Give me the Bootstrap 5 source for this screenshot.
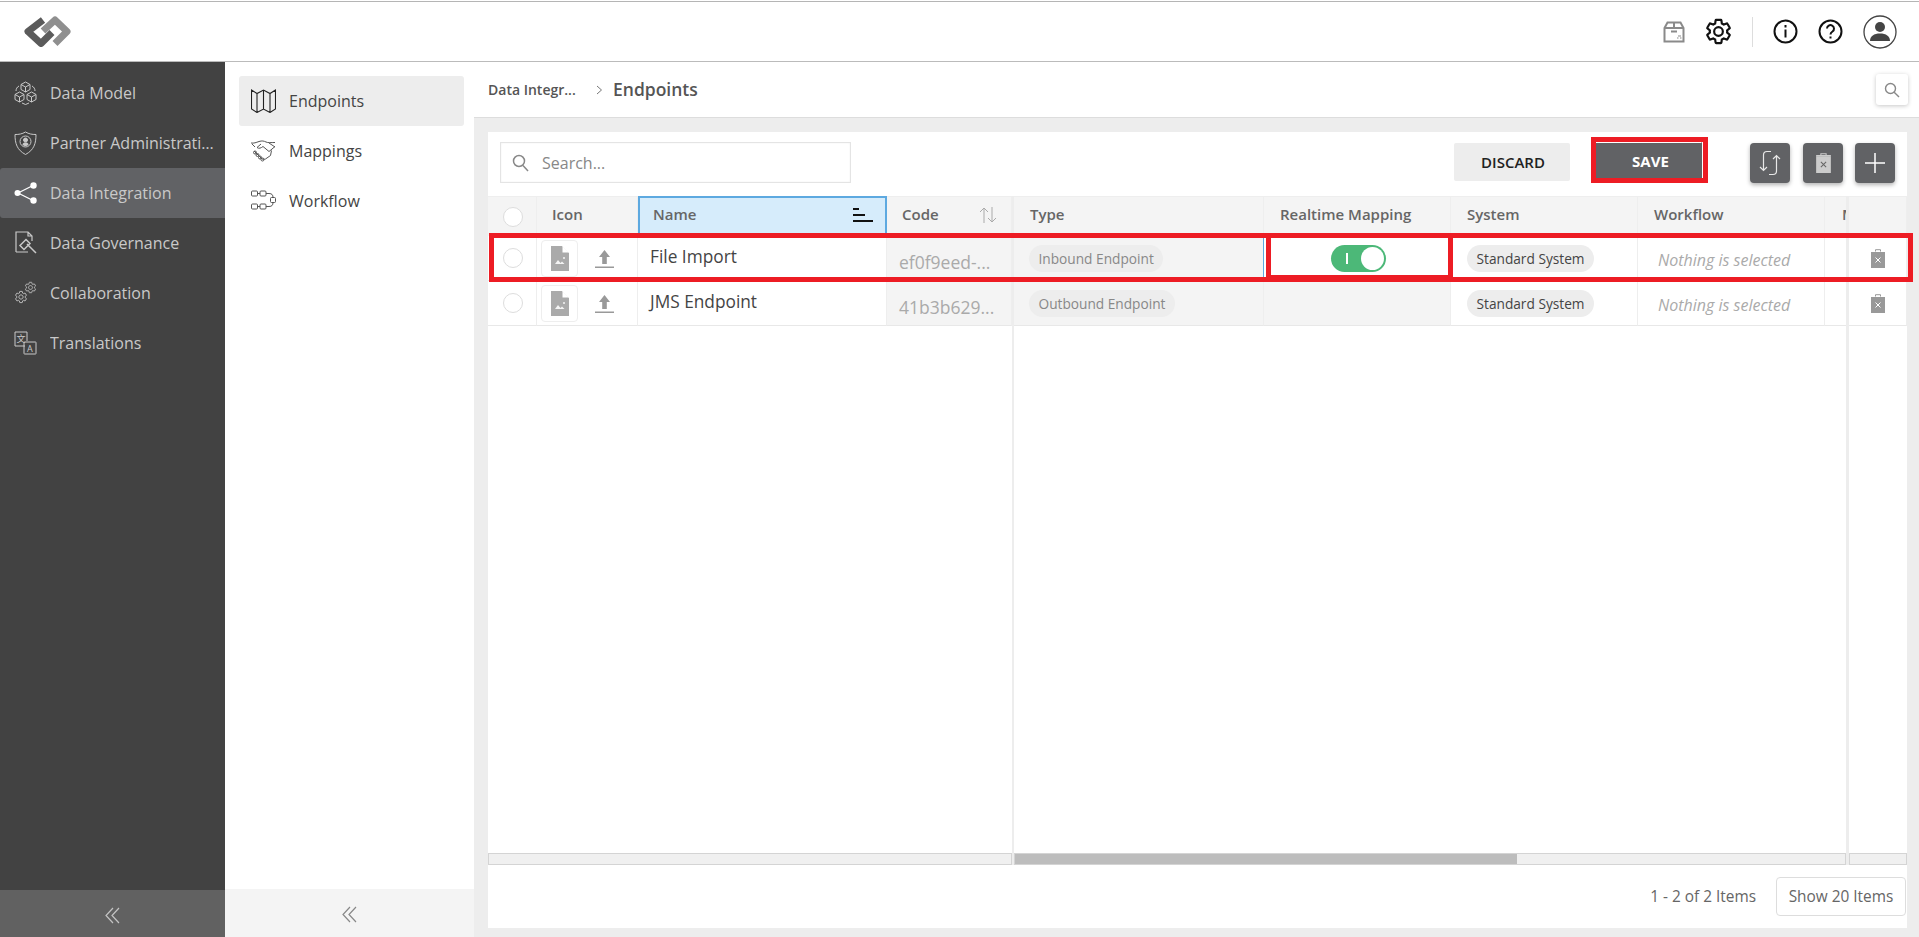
<!DOCTYPE html>
<html lang="en">
<head>
<meta charset="utf-8">
<title>Endpoints</title>
<link rel="stylesheet" href="https://cdn.jsdelivr.net/npm/bootstrap@5.3.0/dist/css/bootstrap.min.css">
<style>
html,body{height:100%;overflow:hidden}
body{font-family:"Open Sans","Liberation Sans",sans-serif;font-size:16px;color:#444;background:#ededed;position:relative}
.topline{height:2px;background:linear-gradient(#fff 0 1px,#b5b5b5 1px);flex:none}
.topbar{height:60px;background:#fff;border-bottom:1px solid #bbb;flex:none;padding-right:22px}
.logo{margin-left:24px}
.tb-box{margin-right:19px}
.tb-sep{width:1px;height:30px;background:#ddd;margin:0 20px 0 19px}
.tb-q{margin-left:20px}
.tb-user{margin-left:20px}
.app-body{flex:1;min-height:0}
.side-dark{width:225px;background:#424242;flex:none;padding-top:6px}
.side-light{width:249px;background:#fff;flex:none;padding-top:14px}
.side-dark .nav-entry{height:50px;color:#c9c9c9;padding-left:14px;gap:13px;border-radius:3px 0 0 3px}
.side-dark .nav-entry svg{flex:none;width:23px;height:24px}
.side-dark .nav-entry.is-on{background:#616265}
.nav-label{min-width:0;white-space:nowrap;overflow:hidden;text-overflow:ellipsis;padding-right:8px}
.side-light .nav-entry{height:50px;margin:0 10px 0 14px;padding-left:12px;gap:13px;border-radius:3px;color:#444}
.side-light .nav-entry svg{flex:none;width:25px;height:24px}
.side-light .nav-entry.is-on{background:#ededed}
.collapse-dark{height:47px;background:#616161;padding-top:3px}
.collapse-light{height:48px;background:#f4f4f4;padding-top:2px}
.crumbbar{height:56px;background:#fff;border-bottom:1px solid #ddd;padding:0 11px 0 14px;flex:none}
.crumb-a{font-size:14px;font-weight:600;color:#555;width:100px}
.crumb-sep{margin:0 10px 0 8px;line-height:0}
.crumb-b{font-size:17.5px;font-weight:600;color:#555}
.crumb-search{width:32px;height:31px;border-radius:3px;background:#fff;box-shadow:0 1px 4px rgba(0,0,0,.22)}
.workarea{flex:1;min-height:0;padding:14px 12px 9px 14px}
.sheet{background:#fff;height:100%}
.toolbar{height:64px;padding:10px 12px 0 12px;flex:none}
.searchbox{width:351px;height:41px;border:1px solid #e4e4e4;padding-left:11px;gap:13px;color:#888;box-shadow:inset 0 0 2px #eee}
.btn.btn-discard{width:116px;height:38px;margin-left:auto;background:#ededed;border-radius:2px;font-size:15px;font-weight:600;color:#222;margin-top:1px;padding:0 0 0 2px}
.btn.btn-save{width:107px;height:37px;margin-left:25px;background:#616265;border-top:1px solid #fff;font-size:15px;font-weight:700;color:#fff;border-radius:0;padding:2px 0 0 4px}
.btn-square{width:40px;height:40px;background:#616265;border-radius:4px;box-shadow:0 2px 4px rgba(0,0,0,.3);margin-top:1px}
.btn-square.first{margin-left:48px}
.btn-square.gap{margin-left:13px}
.btn-square.gap-last{margin-left:12px}
.gridwrap{flex:1;min-height:0}
.pane{min-height:0;overflow:hidden}
.pane-a{width:526px;flex:none;border-right:2px solid #ededed}
.pane-b{flex:1;min-width:0;border-right:3px solid #ededed}
.pane-c{width:58px;flex:none}
.datagrid{table-layout:fixed;margin:0;--bs-table-bg:transparent;--bs-table-border-color:#e8e8e8;border-collapse:separate;border-spacing:0}
.datagrid th,.datagrid td{padding:0;vertical-align:middle;border-bottom:1px solid #e8e8e8;border-right:1px solid #eee;overflow:hidden;white-space:nowrap}
.datagrid th{height:40px;background:#f4f4f4;font-size:15px;font-weight:600;color:#666;border-top:1px solid #eee;padding-left:15px;border-bottom:0;padding-bottom:4px}
.pane-b .datagrid th{padding-left:16px}
.datagrid td{height:45px}
.datagrid td.ro{background:#f4f4f4}
.datagrid th.sorted{background:#d6ecfb;border:2px solid #5da9e0;padding-left:13px}
.sort-mark{position:absolute;top:10px;right:12px}
.sort-mark.soft{right:14px}
.rad{display:block;width:20px;height:20px;border:1px solid #ddd;border-radius:50%;background:#fff;margin-left:15px}
.thumb{width:37px;height:37px;border:1px solid #eee;border-radius:4px;margin-left:4px}
.upl{margin-left:17px}
.namecell{font-size:17.3px;color:#444;padding-left:12px!important;padding-bottom:3px!important}
.codecell{font-size:17.5px;color:#aaa;padding-left:12px!important;padding-top:8px!important}
.pillish{display:inline-block;height:27px;line-height:27px;padding:0 9.5px;border-radius:14px;background:#ededed;font-size:13.7px;color:#888;margin-left:15px}
.pillish.std{color:#444;margin-left:16px}
.noneset{font-size:16px;font-style:italic;color:#aaa;padding-left:20px!important;padding-top:3px!important}
.switchy{width:55px;height:27px;border-radius:14px;background:#4cb878;position:relative;margin:0 auto;left:1px}
.switchy i{position:absolute;left:15px;top:8px;width:2px;height:11px;background:#fff}
.switchy b{position:absolute;right:2px;top:2px;width:23px;height:23px;border-radius:50%;background:#fff}
.rowmark{border-right:1px solid #5da9e0!important}
.trash-ico{display:block;margin:auto}
.hscroll{height:12px;flex:none;background:#f0f0f0;border:1px solid #d4d4d4}
.hscroll-thumb{height:100%;width:60.5%;background:#bdbdbd}
.pager{height:63px;flex:none;padding:12px 1px 0 0;font-size:15.4px;color:#666;gap:20px}
.pager-btn{width:130px;height:39px;border:1px solid #ddd;border-radius:4px;color:#666;font-size:15.4px;background:#fff}
.pane-b .datagrid th.clip-head{padding-left:17px}
.annot{position:absolute;border:solid #ed1c24;pointer-events:none}
.annot-save{left:1591px;top:137px;width:117px;height:46px;border-width:5px}
.annot-row{left:489px;top:233px;width:777px;height:49px;border-width:5px 0 5px 5px}
.annot-map{left:1266px;top:233px;width:187px;height:49px;border-width:5px 5px 7px 5px}
.annot-sys{left:1453px;top:233px;width:460px;height:49px;border-width:5px 5px 5px 0}
</style>
</head>
<body class="d-flex flex-column">
<svg width="0" height="0" class="position-absolute">
<defs>
<symbol id="gear" viewBox="0 0 24 24"><path fill="none" d="M19.14 12.94c.04-.3.06-.61.06-.94 0-.32-.02-.64-.07-.94l2.03-1.58c.18-.14.23-.41.12-.61l-1.92-3.32c-.12-.22-.37-.29-.59-.22l-2.39.96c-.5-.38-1.03-.7-1.62-.94l-.36-2.54c-.04-.24-.24-.41-.48-.41h-3.84c-.24 0-.43.17-.47.41l-.36 2.54c-.59.24-1.13.57-1.62.94l-2.39-.96c-.22-.08-.47 0-.59.22L2.74 8.87c-.12.21-.08.47.12.61l2.03 1.58c-.05.3-.09.63-.09.94s.02.64.07.94l-2.03 1.58c-.18.14-.23.41-.12.61l1.92 3.32c.12.22.37.29.59.22l2.39-.96c.5.38 1.03.7 1.62.94l.36 2.54c.05.24.24.41.48.41h3.84c.24 0 .44-.17.47-.41l.36-2.54c.59-.24 1.13-.56 1.62-.94l2.39.96c.22.08.47 0 .59-.22l1.92-3.32c.12-.22.07-.47-.12-.61l-2.01-1.58zM12 15.6c-1.98 0-3.6-1.62-3.6-3.6s1.62-3.6 3.6-3.6 3.6 1.62 3.6 3.6-1.62 3.6-3.6 3.6z"/></symbol>
<symbol id="fileimg" viewBox="0 0 18 25"><path fill="#aaa" d="M0 0h11l7 7v18H0z"/><path fill="#fff" d="M11.500 0 18 6.500h-6.500z"/><path fill="#f4f4f4" d="M4 18l3-4 2.500 3 1.500-1.500 2.500 2.500z"/><circle cx="13" cy="12" r="1" fill="#f4f4f4"/></symbol>
<symbol id="upload" viewBox="0 0 19 19"><path fill="#999" d="M9.500 1 15 8h-3.200v7H7.200V8H4z"/><rect y="17.500" width="19" height="1.500" fill="#999"/></symbol>
<symbol id="trash" viewBox="0 0 14 19"><path fill="#999" d="M0 3h14v16H0z"/><path fill="none" stroke="#999" d="M4.500 2.500V.7h5v1.800"/><path stroke="#fff" d="M4.500 8.500l5 5m0-5l-5 5"/></symbol>
</defs>
</svg>
<div class="topline"></div>
<header class="topbar d-flex align-items-center">
  <svg class="logo" width="47" height="31" viewBox="0 0 47 31" fill="none" stroke-width="7" stroke-linejoin="round">
    <path stroke="#5b5b5b" d="M19 4 4 15.500 17 27.500 28 16.500"/>
    <path stroke="#8f8f8f" d="M19 15 31 4 43 15.500 31 27.500"/>
  </svg>
  <div class="ms-auto d-flex align-items-center">
    <svg class="tb-box" width="22" height="22" viewBox="0 0 22 22" fill="none" stroke="#8a8a8a" stroke-width="2"><path d="M1.500 7 4.500 1.500h13l3 5.500v13.500h-19zM1.500 7h19M11 1.500V7M8 10.500h6"/><path d="M14 17h1.500M17 17h1.500M15 15h3" stroke-width="1.200"/></svg>
    <svg width="29" height="29" stroke="#111" stroke-width="1.800"><use href="#gear"/></svg>
    <span class="tb-sep"></span>
    <svg width="25" height="25" viewBox="0 0 25 25" fill="none" stroke="#111" stroke-width="2"><circle cx="12.500" cy="12.500" r="11"/><path d="M12.500 10.500v8"/><path d="M12.500 6v2.500"/></svg>
    <svg class="tb-q" width="25" height="25" viewBox="0 0 25 25" fill="none" stroke="#111" stroke-width="2"><circle cx="12.500" cy="12.500" r="11"/><path d="M9 9.500a3.500 3.500 0 1 1 5.500 3c-1.500 1-2 1.600-2 3"/><path d="M12.500 17.500v2"/></svg>
    <svg class="tb-user" width="34" height="34" viewBox="0 0 34 34"><circle cx="17" cy="17" r="16" fill="none" stroke="#444" stroke-width="1.300"/><circle cx="17" cy="12" r="5" fill="#444"/><path fill="#444" d="M7 26c0-5 4-7.500 10-7.500S27 21 27 26z"/></svg>
  </div>
</header>
<div class="app-body d-flex">
  <aside class="side-dark d-flex flex-column">
    <div class="flex-grow-1">
      <div class="nav-entry d-flex align-items-center">
        <svg viewBox="0 0 23 24" fill="none" stroke="#c9c9c9"><path d="M11.500 1l4.500 2.500v5L11.500 11 7 8.500v-5zM7 3.500l4.500 2.500L16 3.500M11.500 6v5M5.500 11 10 13.500v5L5.500 21 1 18.500v-5zM1 13.500 5.500 16l4.500-2.500M5.500 16v5M17.500 11l4.500 2.500v5L17.500 21 13 18.500v-5zM13 13.500l4.500 2.500 4.500-2.500M17.500 16v5M2 10c0-2 1-4 3-5M21 10c0-2-1-4-3-5M8 22l3.500 1.500L15 22"/></svg>
        <span class="nav-label">Data Model</span>
      </div>
      <div class="nav-entry d-flex align-items-center">
        <svg viewBox="0 0 23 24" fill="none" stroke="#c9c9c9"><path d="M11.500 1C8 3 5 3.500 1 3.500c0 9 2 15.500 10.500 20 8.500-4.500 10.500-11 10.500-20-4 0-7-.5-10.500-2.500z"/><circle cx="11.500" cy="10.500" r="5.500"/><circle cx="11.500" cy="9" r="2" fill="#c9c9c9"/><path fill="#c9c9c9" stroke="none" d="M8.500 14c0-2 1.500-2.500 3-2.500s3 .5 3 2.500a5 5 0 0 1-6 0z"/></svg>
        <span class="nav-label">Partner Administration</span>
      </div>
      <div class="nav-entry is-on d-flex align-items-center">
        <svg viewBox="0 0 23 24"><path d="M4 12 19 4.500M4 12l15 7.500" stroke="#fff" stroke-width="1.300" fill="none"/><circle cx="3.500" cy="12" r="3" fill="#fff"/><circle cx="19.500" cy="4.500" r="3.200" fill="#fff"/><circle cx="19.500" cy="19.500" r="3.200" fill="#fff"/></svg>
        <span class="nav-label">Data Integration</span>
      </div>
      <div class="nav-entry d-flex align-items-center">
        <svg viewBox="0 0 23 24" fill="none" stroke="#c9c9c9"><path d="M2 21V1h12l4 4v5M2 21h12M14 1v4h4" stroke-width="1.200"/><path d="M6 14.500 12 8.500l4 4-6 6zM13 13l9 9" stroke-width="1.500"/></svg>
        <span class="nav-label">Data Governance</span>
      </div>
      <div class="nav-entry d-flex align-items-center">
        <svg viewBox="0 0 23 24" stroke="#c9c9c9" stroke-width="1.500"><use href="#gear" x="0" y="9" width="14" height="14"/><use href="#gear" x="10" y="0" width="13" height="13"/></svg>
        <span class="nav-label">Collaboration</span>
      </div>
      <div class="nav-entry d-flex align-items-center">
        <svg viewBox="0 0 23 24" fill="none" stroke="#c9c9c9"><path d="M11 15H1V1h12v9"/><rect x="10" y="11" width="12" height="12" rx=".5"/><text x="2.500" y="11" font-size="9" fill="#c9c9c9" stroke="none" font-family="'Noto Sans CJK SC',sans-serif">文</text><text x="13" y="21" font-size="9" fill="#c9c9c9" stroke="none" font-family="'Open Sans',sans-serif">A</text></svg>
        <span class="nav-label">Translations</span>
      </div>
    </div>
    <div class="collapse-dark d-flex align-items-center justify-content-center">
      <svg width="15" height="17" viewBox="0 0 15 17" fill="none" stroke="#c4c4c4" stroke-width="1.200"><path d="M8 1 1 8.500 8 16M14 1 7 8.500 14 16"/></svg>
    </div>
  </aside>
  <aside class="side-light d-flex flex-column">
    <div class="flex-grow-1">
      <div class="nav-entry is-on d-flex align-items-center">
        <svg viewBox="0 0 25 24" fill="none" stroke="#222" stroke-width="1.100"><path d="M.5 1 6 4.500 12.500 1 19 4.500 24.500 1v19L19 23.500 12.500 20 6 23.500.5 20zM6 4.500v19M12.500 1v19M19 4.500v19"/></svg>
        <span>Endpoints</span>
      </div>
      <div class="nav-entry d-flex align-items-center">
        <svg viewBox="0 0 25 24" fill="none" stroke="#555" stroke-width="1"><path d="M0 4c3 .5 5-.5 8-1.500 3-1 5-.5 7 .5s5 .5 9 .5M1 5l3 3M24 8l-6-4M10 5 6 8.500c2 1.500 4 .5 6-1l6 5 6-5M3 12l7 7c1 1.500 3 1.500 4.500 1l5-3.500 1-5"/><circle cx="4" cy="13.500" r="1.500"/><circle cx="6.500" cy="16" r="1.500"/><circle cx="9" cy="18.500" r="1.500"/><circle cx="11.500" cy="20.500" r="1.500"/></svg>
        <span>Mappings</span>
      </div>
      <div class="nav-entry d-flex align-items-center">
        <svg viewBox="0 0 25 24" fill="none" stroke="#555" stroke-width="1"><rect x=".5" y="2" width="6" height="5" rx="1"/><rect x="9" y="2" width="6" height="5" rx="1"/><rect x=".5" y="15" width="6" height="5" rx="1"/><rect x="9" y="15" width="6" height="5" rx="1"/><rect x="19.500" y="8.500" width="5" height="5" rx="1"/><path d="M6.500 4.500H9M6.500 17.500H9M15 4.500h3c3 0 4 1.500 4 4M15 17.500h3c3 0 4-1.500 4-4"/></svg>
        <span>Workflow</span>
      </div>
    </div>
    <div class="collapse-light d-flex align-items-center justify-content-center">
      <svg width="15" height="17" viewBox="0 0 15 17" fill="none" stroke="#888" stroke-width="1.200"><path d="M8 1 1 8.500 8 16M14 1 7 8.500 14 16"/></svg>
    </div>
  </aside>
  <main class="flex-grow-1 d-flex flex-column" style="min-width:0">
    <div class="crumbbar d-flex align-items-center">
      <span class="crumb-a text-truncate">Data Integr...</span>
      <span class="crumb-sep"><svg width="7" height="10" viewBox="0 0 7 10" fill="none" stroke="#777"><path d="M1 1l4.500 4L1 9"/></svg></span>
      <span class="crumb-b">Endpoints</span>
      <span class="crumb-search ms-auto d-flex align-items-center justify-content-center"><svg width="16" height="16" viewBox="0 0 16 16" fill="none" stroke="#888" stroke-width="1.400"><circle cx="6.500" cy="6.500" r="5"/><path d="M10.200 10.200 15 15"/></svg></span>
    </div>
    <div class="workarea">
      <div class="sheet d-flex flex-column">
        <div class="toolbar d-flex align-items-start">
          <div class="searchbox d-flex align-items-center">
            <svg width="17" height="18" viewBox="0 0 17 18" fill="none" stroke="#888" stroke-width="1.500"><circle cx="7" cy="7" r="5.500"/><path d="M11 11.500 16 17"/></svg>
            <span>Search...</span>
          </div>
          <button type="button" class="btn btn-discard">DISCARD</button>
          <button type="button" class="btn btn-save">SAVE</button>
          <button type="button" class="btn btn-square first p-0 d-flex align-items-center justify-content-center"><svg width="22" height="28" viewBox="0 0 22 28" fill="none" stroke="#e8e8e8" stroke-width="1.200"><path d="M1 18l3.500 3.500L8 18M4.500 21V6c0-2 1-3.500 3.500-3.500h4M21 10l-3.500-3.500L14 10M17.500 6.500V22c0 2-1 3.500-3.500 3.500h-4"/></svg></button>
          <button type="button" class="btn btn-square gap p-0 d-flex align-items-center justify-content-center"><svg width="15" height="20" viewBox="0 0 14 19"><path fill="#ccc" d="M0 3h14v16H0z"/><path fill="none" stroke="#ccc" d="M4.500 2.500V.7h5v1.800M0 2.500h14"/><path stroke="#666" d="M4.500 8.500l5 5m0-5l-5 5"/></svg></button>
          <button type="button" class="btn btn-square gap-last p-0 d-flex align-items-center justify-content-center"><svg width="20" height="20" viewBox="0 0 20 20" stroke="#fff" stroke-width="1.500"><path d="M10 0v20M0 10h20"/></svg></button>
        </div>
        <div class="gridwrap d-flex">
          <section class="pane pane-a d-flex flex-column">
            <table class="table datagrid" style="width:524px">
              <colgroup><col style="width:49px"><col style="width:101px"><col style="width:249px"><col style="width:125px"></colgroup>
              <thead><tr>
                <th class="p-0"><span class="rad"></span></th>
                <th>Icon</th>
                <th class="sorted position-relative">Name
                  <svg class="sort-mark" width="20" height="14" viewBox="0 0 20 14" fill="#111"><rect width="6" height="2"/><rect y="6" width="12" height="2"/><rect y="12" width="20" height="2"/></svg></th>
                <th class="position-relative">Code
                  <svg class="sort-mark soft" width="18" height="16" viewBox="0 0 18 16" fill="none" stroke="#aaa"><path d="M5 16V1M1 5l4-4 4 4M13 0v15M9 11l4 4 4-4"/></svg></th>
              </tr></thead>
              <tbody>
                <tr>
                  <td><span class="rad"></span></td>
                  <td><div class="d-flex align-items-center"><span class="thumb d-flex align-items-center justify-content-center"><svg width="18" height="25"><use href="#fileimg"/></svg></span><svg class="upl" width="19" height="19"><use href="#upload"/></svg></div></td>
                  <td class="namecell">File Import</td>
                  <td class="codecell ro text-truncate">ef0f9eed-...</td>
                </tr>
                <tr>
                  <td><span class="rad"></span></td>
                  <td><div class="d-flex align-items-center"><span class="thumb d-flex align-items-center justify-content-center"><svg width="18" height="25"><use href="#fileimg"/></svg></span><svg class="upl" width="19" height="19"><use href="#upload"/></svg></div></td>
                  <td class="namecell">JMS Endpoint</td>
                  <td class="codecell ro text-truncate">41b3b629...</td>
                </tr>
              </tbody>
            </table>
            <div class="flex-grow-1"></div>
            <div class="hscroll"></div>
          </section>
          <section class="pane pane-b d-flex flex-column">
            <table class="table datagrid" style="width:998px">
              <colgroup><col style="width:250px"><col style="width:187px"><col style="width:187px"><col style="width:187px"><col style="width:187px"></colgroup>
              <thead><tr>
                <th>Type</th><th>Realtime Mapping</th><th>System</th><th>Workflow</th><th class="clip-head">M</th>
              </tr></thead>
              <tbody>
                <tr>
                  <td class="ro rowmark"><span class="pillish">Inbound Endpoint</span></td>
                  <td><div class="switchy"><i></i><b></b></div></td>
                  <td><span class="pillish std">Standard System</span></td>
                  <td class="noneset">Nothing is selected</td>
                  <td></td>
                </tr>
                <tr>
                  <td class="ro"><span class="pillish">Outbound Endpoint</span></td>
                  <td class="ro"></td>
                  <td><span class="pillish std">Standard System</span></td>
                  <td class="noneset">Nothing is selected</td>
                  <td></td>
                </tr>
              </tbody>
            </table>
            <div class="flex-grow-1"></div>
            <div class="hscroll"><div class="hscroll-thumb"></div></div>
          </section>
          <section class="pane pane-c d-flex flex-column">
            <table class="table datagrid" style="width:58px">
              <thead><tr><th></th></tr></thead>
              <tbody>
                <tr><td><svg class="trash-ico" width="14" height="19"><use href="#trash"/></svg></td></tr>
                <tr><td><svg class="trash-ico" width="14" height="19"><use href="#trash"/></svg></td></tr>
              </tbody>
            </table>
            <div class="flex-grow-1"></div>
            <div class="hscroll"></div>
          </section>
        </div>
        <div class="pager d-flex align-items-start justify-content-end">
          <span class="pt-2">1 - 2 of 2 Items</span>
          <button type="button" class="btn pager-btn p-0">Show 20 Items</button>
        </div>
      </div>
    </div>
  </main>
</div>
<div class="annot annot-save"></div>
<div class="annot annot-row"></div>
<div class="annot annot-map"></div>
<div class="annot annot-sys"></div>
</body>
</html>
